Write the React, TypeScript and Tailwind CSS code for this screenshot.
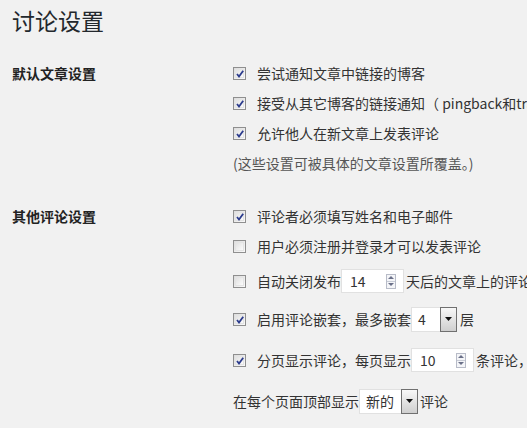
import React from "react";

const font = { fontFamily: '"Noto Sans CJK SC", "Noto Sans", sans-serif' };

function Checkbox({ checked }: { checked?: boolean }) {
  return (
    <div className="relative w-[13px] h-[13px] border border-[#8f8f8f] bg-gradient-to-br from-[#dcdcdc] to-[#fafafa] shrink-0">
      <div className="absolute inset-[1px] border border-[#e4e4e4] bg-gradient-to-br from-[#e2e2e2] to-[#fbfbfb]" />
      {checked && (
        <svg className="absolute left-[1px] top-[1px]" width="10" height="10" viewBox="0 0 10 10">
          <path d="M2 5 L4 7.5 L8.2 1.8" stroke="#2b3b8c" strokeWidth="1.8" fill="none" />
        </svg>
      )}
    </div>
  );
}

function NumInput({ value }: { value: string }) {
  return (
    <div className="flex items-center justify-between w-[63px] h-[24px] bg-white border border-[#e1e1e1] pl-[8px] pr-[7px] text-[14px] text-[#333] shrink-0">
      <span>{value}</span>
      <div className="flex flex-col w-[10px] h-[15px] border border-[#b8bcc8] bg-[#f4f5f8]">
        <div className="flex-1 flex items-center justify-center border-b border-[#c8ccd6]">
          <svg width="6" height="3" viewBox="0 0 6 3"><path d="M0 3 L3 0 L6 3 Z" fill="#6a7088" /></svg>
        </div>
        <div className="flex-1 flex items-center justify-center">
          <svg width="6" height="3" viewBox="0 0 6 3"><path d="M0 0 L3 3 L6 0 Z" fill="#6a7088" /></svg>
        </div>
      </div>
    </div>
  );
}

function Select({ value, w }: { value: string; w: string }) {
  return (
    <div className={`flex items-center justify-between h-[25px] bg-white border border-[#e1e1e1] pl-[6px] pr-0 text-[14px] text-[#333] shrink-0 ${w}`}>
      <span>{value}</span>
      <div className="w-[17px] h-[25px] -mr-px border border-[#707070] bg-gradient-to-b from-[#f8f8f8] to-[#cfcfcf] flex items-center justify-center">
        <svg width="7" height="4" viewBox="0 0 7 4"><path d="M0 0 L7 0 L3.5 4 Z" fill="#111" /></svg>
      </div>
    </div>
  );
}

export default function App() {
  return (
    <div className="w-[527px] h-[428px] overflow-hidden bg-[#f1f1f1] text-[#333] whitespace-nowrap" style={font}>
      <h1 className="pl-[12px] pt-[4px] h-[58px] text-[23px] leading-[32px] text-[#23282d] font-normal">讨论设置</h1>
      <div className="flex">
        <div className="w-[233px] shrink-0 pl-[12px] h-[30px] flex items-center text-[14px] font-bold text-[#222]">默认文章设置</div>
        <div className="flex flex-col text-[14px]">
          <div className="h-[30px] flex items-center gap-[11px]"><Checkbox checked /><span>尝试通知文章中链接的博客</span></div>
          <div className="h-[30px] flex items-center gap-[11px]"><Checkbox checked /><span>接受从其它博客的链接通知（ pingback和trackback）</span></div>
          <div className="h-[30px] flex items-center gap-[11px]"><Checkbox checked /><span>允许他人在新文章上发表评论</span></div>
          <div className="h-[30px] flex items-center text-[#555]">(这些设置可被具体的文章设置所覆盖。)</div>
        </div>
      </div>
      <div className="flex mt-[23px]">
        <div className="w-[233px] shrink-0 pl-[12px] h-[30px] flex items-center text-[14px] font-bold text-[#222]">其他评论设置</div>
        <div className="flex flex-col text-[14px]">
          <div className="h-[30px] flex items-center gap-[11px]"><Checkbox checked /><span>评论者必须填写姓名和电子邮件</span></div>
          <div className="h-[31px] flex items-center gap-[11px]"><Checkbox /><span>用户必须注册并登录才可以发表评论</span></div>
          <div className="h-[38px] flex items-center gap-[11px]"><Checkbox />
            <div className="flex items-center"><span>自动关闭发布</span><NumInput value="14" /><span className="ml-[2px]">天后的文章上的评论</span></div>
          </div>
          <div className="h-[38px] flex items-center gap-[11px]"><Checkbox checked />
            <div className="flex items-center"><span>启用评论嵌套，最多嵌套</span><Select value="4" w="w-[46px]" /><span className="ml-[3px]">层</span></div>
          </div>
          <div className="h-[44px] flex items-center gap-[11px]"><Checkbox checked />
            <div className="flex items-center"><span>分页显示评论，每页显示</span><NumInput value="10" /><span className="ml-[2px]">条评论，默认显示最后一页</span></div>
          </div>
          <div className="h-[38px] flex items-center">
            <span>在每个页面顶部显示</span><Select value="新的" w="w-[59px]" /><span className="ml-[2px]">评论</span>
          </div>
        </div>
      </div>
    </div>
  );
}
